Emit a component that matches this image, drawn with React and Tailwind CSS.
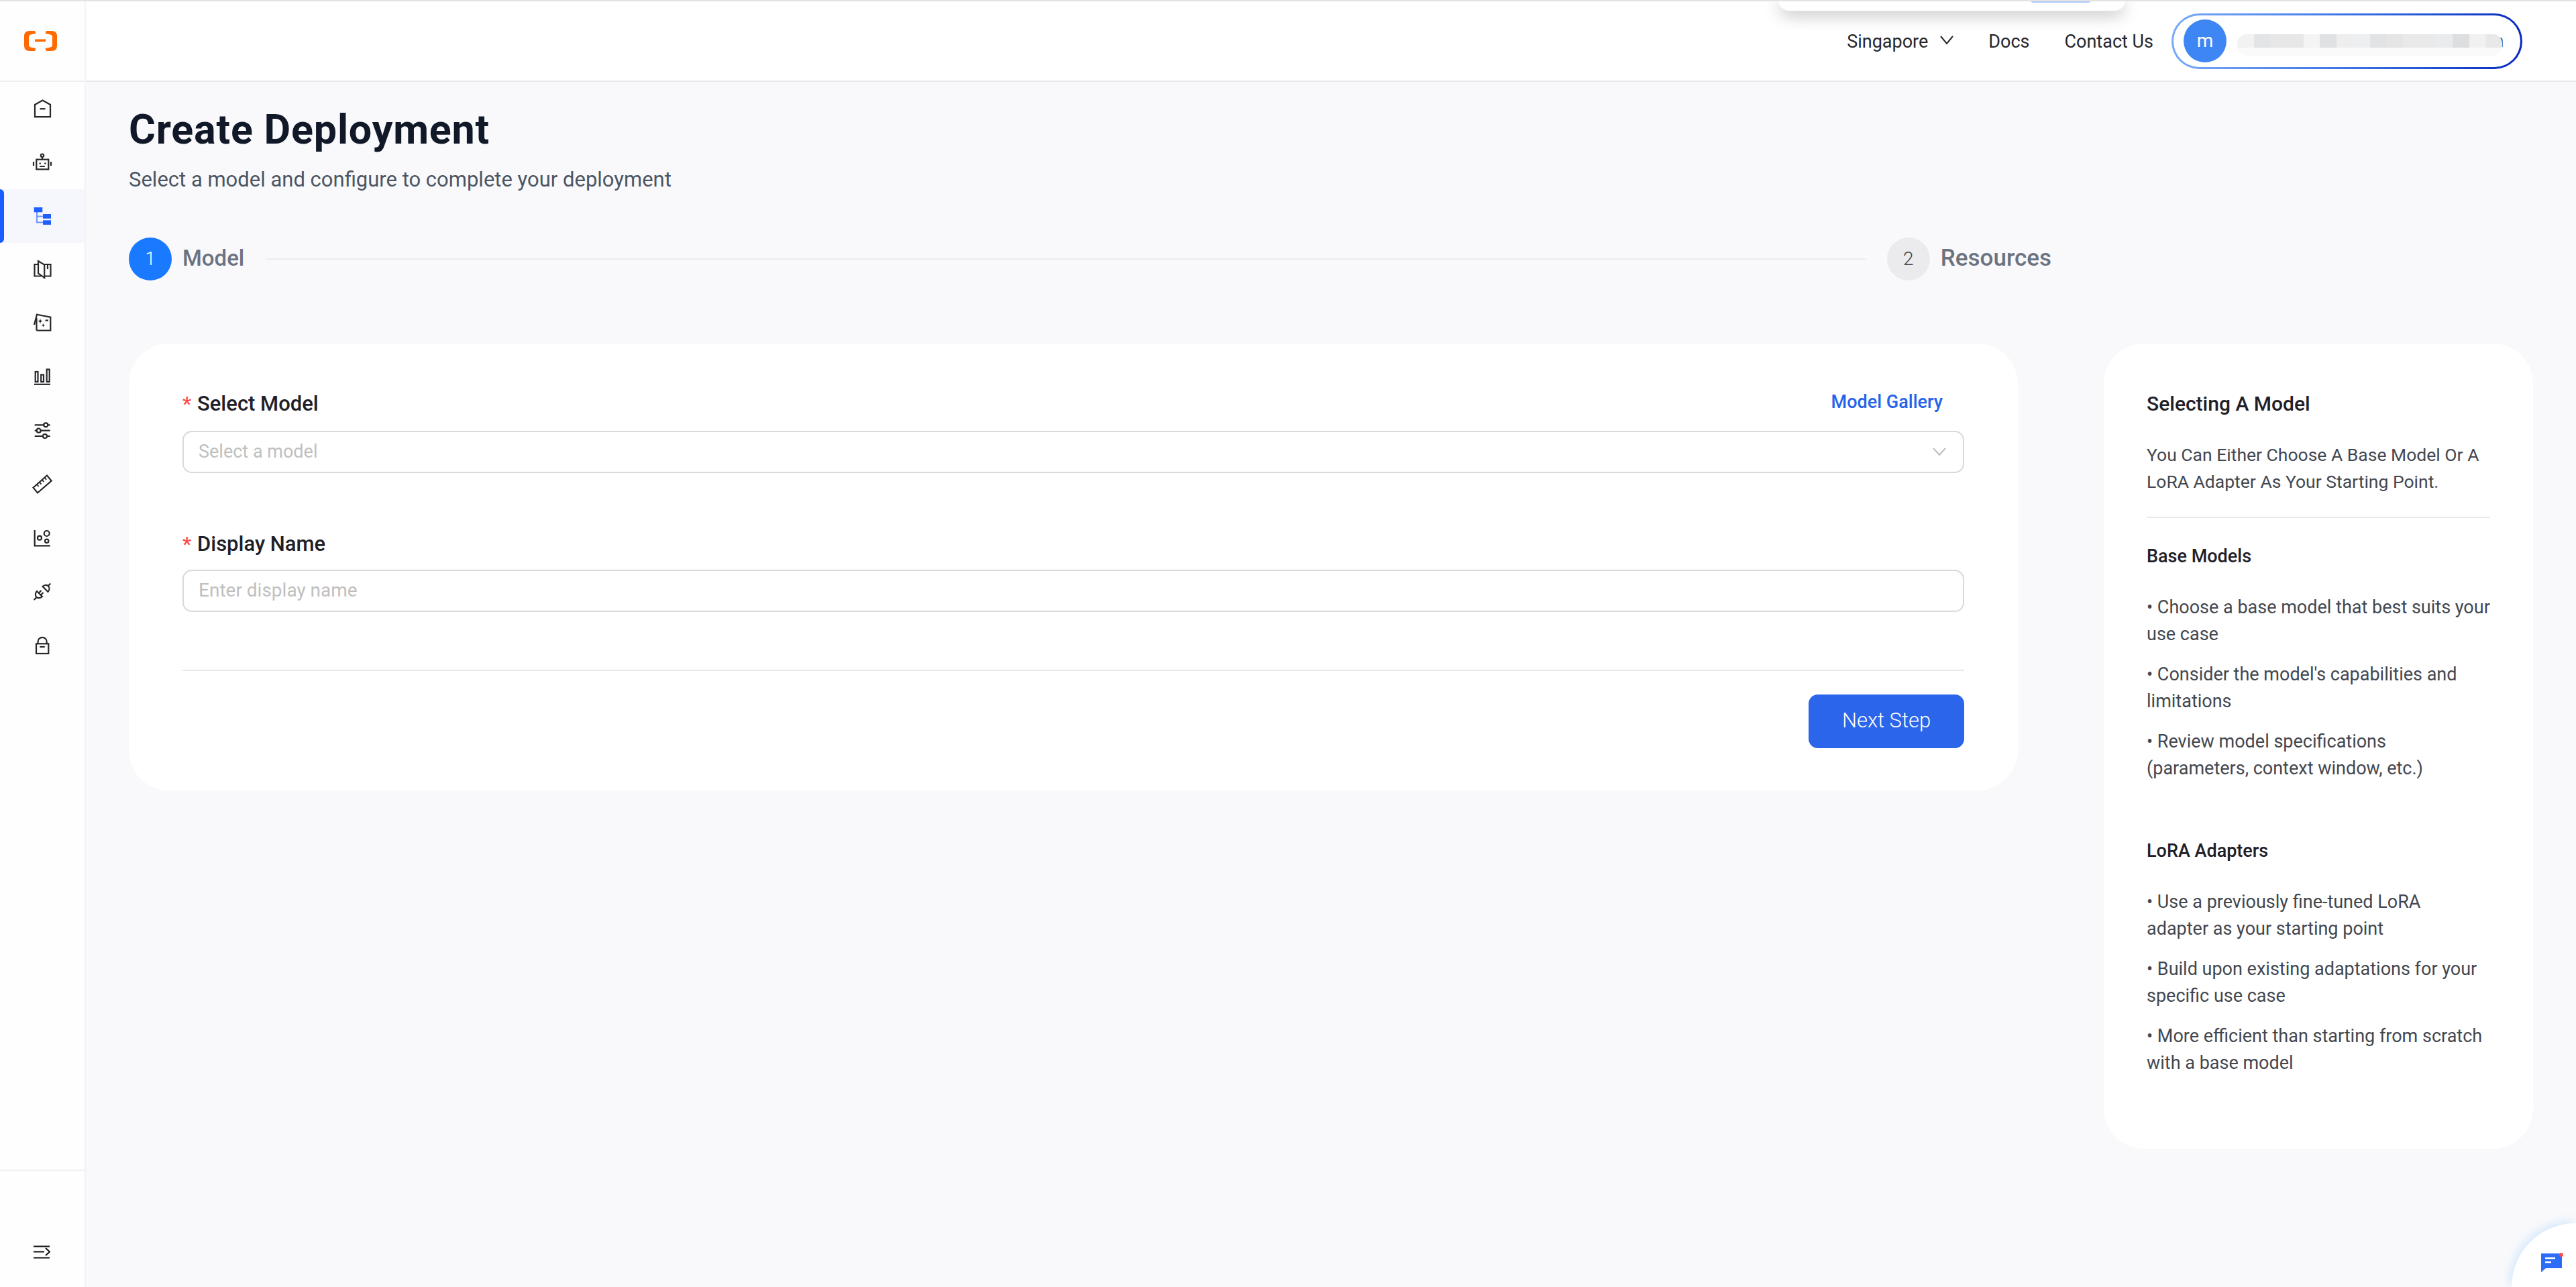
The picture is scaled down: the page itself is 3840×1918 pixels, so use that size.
import React from 'react';

const FONT = "font-['Roboto','Liberation_Sans',sans-serif]";

function Icon({ children, color = 'text-[#27272a]' }) {
  return (
    <svg viewBox="0 0 32 32" fill="none" stroke="currentColor" strokeWidth="2.2" className={`w-8 h-8 ${color}`}>
      {children}
    </svg>
  );
}

const navIcons = [
  <Icon key="home">
    <path d="M5 28.2V10L16.5 3.5 28 10v18.2z" />
    <path d="M12.5 16.2h8" />
  </Icon>,
  <Icon key="robot">
    <circle cx="16" cy="5.7" r="2.2" />
    <path d="M16 8v3.7" />
    <rect x="7.3" y="11.7" width="18" height="14.6" />
    <path d="M12.2 22h7.6M3 15v6M29 15v6" />
    <circle cx="12.7" cy="17.5" r="1.2" fill="currentColor" stroke="none" />
    <circle cx="20.3" cy="17.5" r="1.2" fill="currentColor" stroke="none" />
  </Icon>,
  <Icon key="tree" color="text-[#1f5fff]">
    <path d="M8 10v15.5h9M8 16.5h9" stroke="#6f97ff" />
    <rect x="3.7" y="3" width="12.6" height="7.3" fill="currentColor" stroke="none" />
    <rect x="17" y="13" width="12" height="6.7" fill="currentColor" stroke="none" />
    <rect x="17" y="22.3" width="12" height="6.6" fill="currentColor" stroke="none" />
  </Icon>,
  <Icon key="book">
    <path d="M10 8H4.5v17.5H14M19 8h9.5v17.5H20" />
    <path d="M10 3l9.2 5.5V28L10 21.5z" />
    <path d="M24 8v7" />
  </Icon>,
  <Icon key="spark">
    <path d="M7.5 26.5H28.3V6.7L8 2.7 4 18" />
    <path d="M7.5 8v18.5" />
    <path d="M13 9l1 2.6 2.6 1-2.6 1-1 2.6-1-2.6-2.6-1 2.6-1zM17.4 16l.8 2 2 .8-2 .8-.8 2-.8-2-2-.8 2-.8z" fill="currentColor" stroke="none" />
    <path d="M20.5 11.5H25" />
  </Icon>,
  <Icon key="bars">
    <rect x="5.7" y="8" width="3.8" height="15" />
    <rect x="14.2" y="12.5" width="3.8" height="10.5" />
    <rect x="22.7" y="4.5" width="4" height="18.5" />
    <path d="M4 26.8h24" />
  </Icon>,
  <Icon key="sliders">
    <path d="M4.7 7.3h23M4.7 15.7h23M4.7 24h23" />
    <circle cx="21.3" cy="7.3" r="3" fill="#fff" />
    <circle cx="10.7" cy="15.7" r="3" fill="#fff" />
    <circle cx="20" cy="24" r="3" fill="#fff" />
  </Icon>,
  <Icon key="ruler">
    <path d="M2.5 20.7L23 2.5l6.7 8.2L9 28.5z" />
    <path d="M8.2 16l2.5 3M12 12.6l2.5 3M15.8 9.2l2.5 3M19.6 5.8l2.5 3" strokeWidth="1.8" />
  </Icon>,
  <Icon key="scatter">
    <path d="M4.7 4v23.3h23" />
    <circle cx="12" cy="15.7" r="3" />
    <circle cx="22.7" cy="9" r="4" />
    <circle cx="22.7" cy="20.3" r="2.7" />
  </Icon>,
  <Icon key="plug">
    <path d="M3.7 28l3.6-3.6M28.3 3.5L24.8 7" />
    <path d="M8 15l8 8c-2.6 2.6-6.4 2.8-8.6 1.2C5.4 22 5.2 17.8 8 15z" />
    <path d="M16.5 8l8 8c2.6-2.6 2.4-6.3.5-8.6-2.3-2-6-2-8.5.6z" />
    <path d="M11 17.5l3.5-3.5M14 20.5l3.5-3.5" />
  </Icon>,
  <Icon key="lock">
    <rect x="7" y="13.3" width="18.3" height="14.7" />
    <path d="M9.5 13v-2.5a6.6 6.6 0 0 1 13.2 0V13" />
    <path d="M12.3 18h7.4" />
  </Icon>,
];

const mosaic = [
  'bg-[#f2f2f2]', 'bg-[#e3e4e5]', 'bg-[#e7e7e8]', 'bg-[#e7e7e8]', 'bg-[#f4f4f4]', 'bg-[#e0e1e3]', 'bg-[#eeeeef]', 'bg-[#eeeff0]',
  'bg-[#e2e3e4]', 'bg-[#e5e5e6]', 'bg-[#e9e9ea]', 'bg-[#e9e9ea]', 'bg-[#eaebec]', 'bg-[#dddee0]', 'bg-[#f1f1f1]', 'bg-[#e8e8e9]',
];

function Sidebar() {
  return (
    <aside className="w-[128px] shrink-0 bg-[#fefefe] border-r-2 border-[#f3f3f6] flex flex-col">
      <div className="h-[118px] flex items-center justify-center shrink-0 pr-[6px]">
        <svg viewBox="36 46 49 30" fill="#ff6a00" className="w-[49px] h-[30px]">
          <path d="M52 46H44Q36 46 36 54V68Q36 76 44 76H52L53.5 72 46 70.5Q43 70 43 67V55Q43 52 46 51.5L53.5 50Z" />
          <path d="M69 46H77Q85 46 85 54V68Q85 76 77 76H69L67.5 72 75 70.5Q78 70 78 67V55Q78 52 75 51.5L67.5 50Z" />
          <rect x="52" y="58.5" width="16" height="3.6" />
        </svg>
      </div>
      <nav className="border-t-2 border-[#f0f0f4] flex-1 flex flex-col">
        {navIcons.map((icon, i) => (
          <div key={i} className={`relative h-20 shrink-0 flex items-center justify-center ${i === 2 ? 'bg-[#f6f7fd]' : ''}`}>
            {i === 2 && <span className="absolute left-0 top-0 w-[6px] h-full bg-[#1a5cff] rounded-r-[6px]" />}
            {icon}
          </div>
        ))}
      </nav>
      <div className="h-[175px] border-t-2 border-[#f1f1f4] flex items-end justify-center pb-[42px] pr-[2px]">
        <svg viewBox="0 0 26 20" fill="none" stroke="#111" strokeWidth="2" className="w-[26px] h-5">
          <path d="M1 1.5h24M1 9.5h16M1 18.5h24M19 4l6 5.5-6 5.5" />
        </svg>
      </div>
    </aside>
  );
}

function Header() {
  return (
    <header className="relative h-[120px] shrink-0 bg-white border-b-2 border-[#e8e8ee] flex items-center justify-end pr-[80px]">
      <div className="absolute top-[-2px] left-[2523px] w-[517px] h-[16px] bg-white rounded-b-[16px] shadow-[0_6px_24px_rgba(0,0,0,0.28)] flex justify-end pr-[51px]">
        <div className="w-[90px] h-[4px] border-2 border-t-0 border-[#a9c9fb] rounded-b-[10px]" />
      </div>
      <div className="flex items-center text-[27px] text-[#27272a] gap-[52px] mr-[27px] mt-[2px]">
        <div className="flex items-center gap-[18px]">
          <span>Singapore</span>
          <svg viewBox="0 0 20 14" fill="none" stroke="#27272a" strokeWidth="2" className="w-5 h-[14px] mb-[4px]">
            <path d="M1 1l9 11 9-11" />
          </svg>
        </div>
        <span>Docs</span>
        <span>Contact Us</span>
      </div>
      <div className="w-[523px] h-[83px] rounded-full p-[3px] bg-linear-to-r from-[#79a9f8] via-[#3c74e6] to-[#0c27bd]">
        <div className="h-full rounded-full bg-white flex items-center pl-[15px]">
          <div className="w-16 h-16 rounded-full bg-[#3f86f5] text-white text-[28px] flex items-center justify-center shrink-0">m</div>
          <div className="relative z-10 ml-[16px] mt-[11px] w-[395px] h-[32px] flex rounded-[14px] overflow-hidden">
            <div className="absolute inset-x-0 bottom-0 h-[12px] bg-[#fafafa]" />
            {mosaic.map((c, i) => (
              <span key={i} className={`relative w-[24.7px] h-[20px] ${c}`} />
            ))}
          </div>
          <span className="text-[26px] text-[#444] ml-[-12px]">n</span>
        </div>
      </div>
    </header>
  );
}

function Step({ n, label, active }) {
  return (
    <div className="flex items-center gap-4 shrink-0">
      <div className={`w-16 h-16 rounded-full flex items-center justify-center text-[28px] font-light ${active ? 'bg-[#1a7aff] text-white' : 'bg-[#ebebed] text-[#444]'}`}>
        {n}
      </div>
      <span className={`font-medium text-[#6b7280] mb-[2px] ${active ? 'text-[33px]' : 'text-[35px]'}`}>{label}</span>
    </div>
  );
}

function Field({ label, action, children }) {
  return (
    <div>
      <div className="flex items-center justify-between pr-[32px]">
        <label className="flex items-center text-[31px] leading-[44px] font-medium text-[#1f2027]">
          <span className="text-[#ff4d4f] w-[22px] text-[30px]">*</span>
          {label}
        </label>
        {action}
      </div>
      <div className="mt-4 h-[63px] rounded-[14px] border-2 border-[#d9d9d9] bg-white flex items-center justify-between pl-[22px] pr-[25px]">
        {children}
      </div>
    </div>
  );
}

function Guide({ title, items, className }) {
  return (
    <div className={className}>
      <h4 className="text-[27px] leading-[40px] font-medium text-[#1f2027]">{title}</h4>
      <div className="mt-[36px] flex flex-col gap-[20px]">
        {items.map((t) => (
          <p key={t} className="text-[27px] leading-[40px] text-[#43474f] whitespace-pre-line">{`• ${t}`}</p>
        ))}
      </div>
    </div>
  );
}

export default function App() {
  return (
    <div className={`w-[3840px] h-[1918px] overflow-hidden bg-[#f9f9fb] border-t-2 border-[#e2e2e2] flex ${FONT}`}>
      <Sidebar />
      <div className="flex-1 min-w-0 flex flex-col relative">
        <Header />
        <main className="flex-1 px-16">
          <h1 className="mt-[33px] text-[61px] leading-[76px] tracking-[0.8px] font-bold text-[#111827]">Create Deployment</h1>
          <p className="mt-[15px] text-[31px] leading-[44px] text-[#4b5563]">Select a model and configure to complete your deployment</p>

          <div className="mt-16 w-[2866px] flex items-center">
            <Step n="1" label="Model" active />
            <div className="flex-1 mx-8 h-[2px] bg-[#ececef]" />
            <Step n="2" label="Resources" />
          </div>

          <div className="mt-[94px] flex gap-32 items-start">
            <section className="w-[2816px] h-[666px] bg-white rounded-[60px] px-20 pt-[67px]">
              <Field
                label="Select Model"
                action={<a className="text-[27px] font-medium text-[#2563eb] mb-[6px]">Model Gallery</a>}
              >
                <span className="text-[27px] text-[#bfbfbf]">Select a model</span>
                <svg viewBox="0 0 20 12" fill="none" stroke="#bdbdbd" strokeWidth="2" className="w-5 h-3">
                  <path d="M1 1l9 10 9-10" />
                </svg>
              </Field>
              <div className="mt-[84px]">
                <Field label="Display Name">
                  <span className="text-[28px] text-[#bfbfbf]">Enter display name</span>
                </Field>
              </div>
              <div className="mt-[86px] h-[2px] bg-[#e6e6ec]" />
              <div className="mt-[35px] flex justify-end">
                <button className="w-[232px] h-20 rounded-[14px] bg-[#2b66ea] text-white text-[31px] font-light">Next Step</button>
              </div>
            </section>

            <aside className="w-[640px] h-[1200px] bg-white rounded-[60px] px-16 pt-[68px]">
              <h3 className="text-[30px] leading-[44px] font-medium text-[#1f2027]">Selecting A Model</h3>
              <p className="mt-[34px] text-[26.5px] leading-[40px] text-[#43474f]">You Can Either Choose A Base Model Or A LoRA Adapter As Your Starting Point.</p>
              <div className="mt-[32px] h-[2px] bg-[#e8e8ee]" />
              <Guide
                className="mt-[37px]"
                title="Base Models"
                items={[
                  "Choose a base model that best suits your use case",
                  "Consider the model's capabilities and limitations",
                  "Review model specifications (parameters, context window, etc.)",
                ]}
              />
              <Guide
                className="mt-[83px]"
                title="LoRA Adapters"
                items={[
                  "Use a previously fine-tuned LoRA\nadapter as your starting point",
                  "Build upon existing adaptations for your specific use case",
                  "More efficient than starting from scratch with a base model",
                ]}
              />
            </aside>
          </div>
        </main>

        <div className="absolute right-0 bottom-0 w-[96px] h-[95px] bg-white rounded-tl-full shadow-[-3px_-3px_14px_rgba(120,190,255,0.3)]">
          <svg viewBox="0 0 34 30" className="absolute left-[43px] top-[44px] w-[34px] h-[30px]">
            <path d="M1 1h31v22H8l-7 6z" fill="#2d6cf6" />
            <path d="M7 8h15M7 14h9" stroke="#fff" strokeWidth="2.4" />
            <circle cx="31" cy="3" r="3" fill="#ff4d4f" />
          </svg>
        </div>
      </div>
    </div>
  );
}
